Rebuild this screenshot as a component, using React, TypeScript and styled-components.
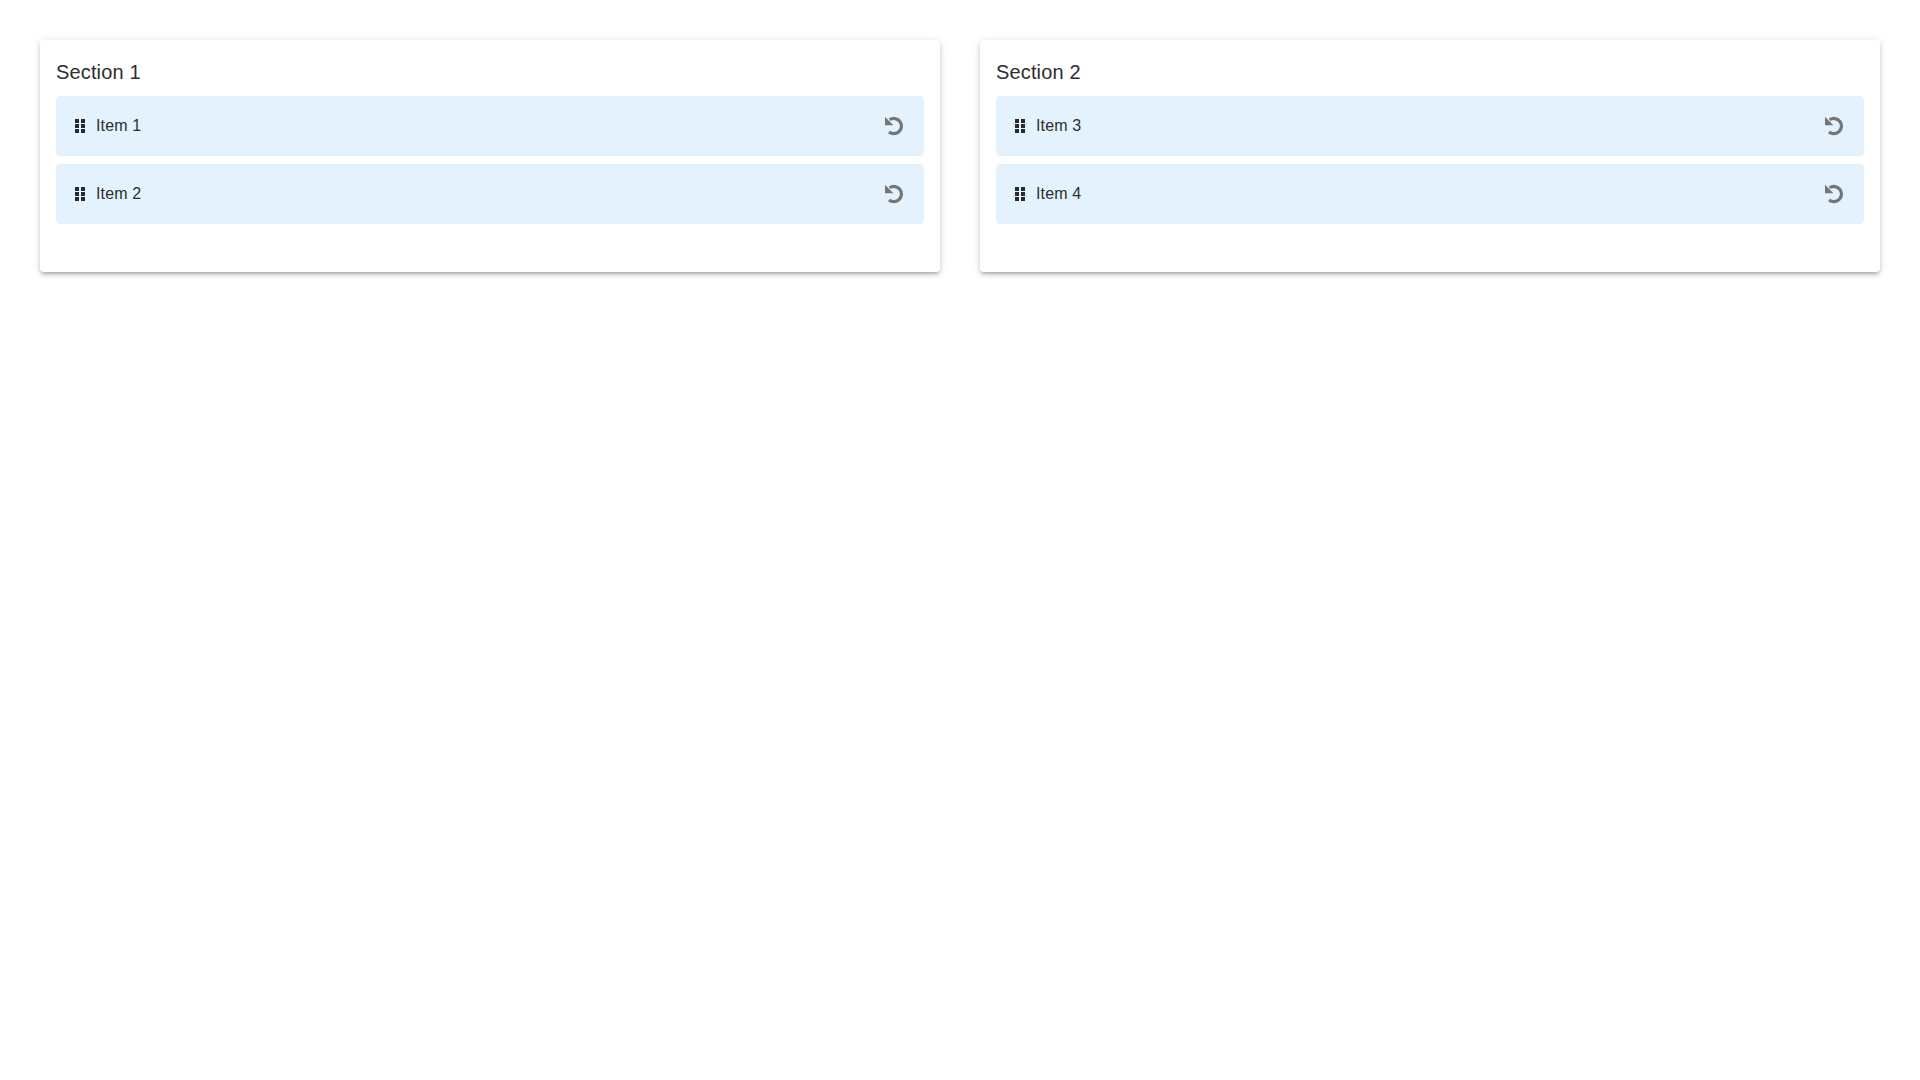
import React from "react";
import styled, { createGlobalStyle } from "styled-components";

const Global = createGlobalStyle`
  html, body { margin: 0; padding: 0; background: #fff; }
  body { font-family: "Liberation Sans", Arial, sans-serif; color: #2e2e2e; }
`;

const Board = styled.main`
  display: grid;
  grid-template-columns: 1fr 1fr;
  gap: 40px;
  padding: 40px;
`;

const Card = styled.section`
  background: #fff;
  border-radius: 4px;
  padding: 16px;
  box-shadow: 0 3px 3px -2px rgba(0, 0, 0, 0.2), 0 3px 4px 0 rgba(0, 0, 0, 0.14), 0 1px 8px 0 rgba(0, 0, 0, 0.12);
`;

const Title = styled.h2`
  margin: 0 0 8px;
  font-size: 20px;
  font-weight: 400;
  line-height: 32px;
  letter-spacing: 0.15px;
  color: #2e2e2e;
`;

const List = styled.div`
  display: flex;
  flex-direction: column;
  gap: 8px;
  min-height: 160px;
`;

const Row = styled.div`
  display: flex;
  align-items: center;
  justify-content: space-between;
  height: 60px;
  padding: 0 16px;
  box-sizing: border-box;
  background: #e3f2fd;
  border-radius: 4px;
`;

const Label = styled.div`
  display: flex;
  align-items: center;
  gap: 8px;
  font-size: 16px;
  letter-spacing: 0.15px;
  color: #2e2e2e;
`;

const Grip = styled.svg`
  display: block;
  width: 16px;
  height: 16px;
  fill: #2b2b2b;
`;

const ResetButton = styled.button`
  display: flex;
  padding: 4px;
  border: 0;
  background: none;
  color: #757575;
  cursor: pointer;
`;

const ResetGlyph = styled.svg`
  display: block;
  width: 20px;
  height: 20px;
`;

const GripIcon = () => (
  <Grip viewBox="0 0 16 16" aria-hidden="true">
    <rect x="3" y="1" width="4" height="4" />
    <rect x="9" y="1" width="4" height="4" />
    <rect x="3" y="6" width="4" height="4" />
    <rect x="9" y="6" width="4" height="4" />
    <rect x="3" y="11" width="4" height="4" />
    <rect x="9" y="11" width="4" height="4" />
  </Grip>
);

const ResetIcon = () => (
  <ResetGlyph viewBox="0 0 20 20" aria-hidden="true">
    <path d="M1 .8V9.2H9.4Z" fill="currentColor" />
    <path d="M5.6 3.8A7.6 7.6 0 1 1 5 15.9" fill="none" stroke="currentColor" strokeWidth="3.2" />
  </ResetGlyph>
);

const sections = [
  { title: "Section 1", items: ["Item 1", "Item 2"] },
  { title: "Section 2", items: ["Item 3", "Item 4"] },
];

export default function App() {
  return (
    <>
      <Global />
      <Board>
        {sections.map((section) => (
          <Card key={section.title}>
            <Title>{section.title}</Title>
            <List>
              {section.items.map((item) => (
                <Row key={item}>
                  <Label>
                    <GripIcon />
                    {item}
                  </Label>
                  <ResetButton aria-label={`Reset ${item}`}>
                    <ResetIcon />
                  </ResetButton>
                </Row>
              ))}
            </List>
          </Card>
        ))}
      </Board>
    </>
  );
}
